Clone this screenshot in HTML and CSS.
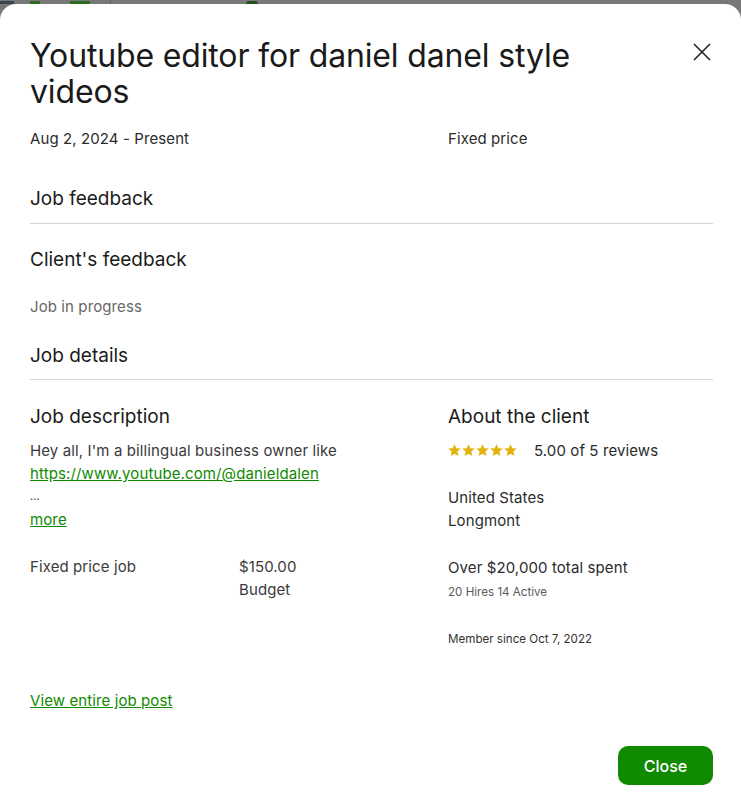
FILE: index.html
```html
<!DOCTYPE html>
<html lang="en">
<head>
<meta charset="utf-8">
<title>Job details</title>
<link rel="stylesheet" href="styles.css">
</head>
<body>
<div class="backdrop">
  <div class="bg-strip">
    <span class="bg-dark"></span>
    <span class="bg-green g1"></span>
    <span class="bg-green g2"></span>
    <span class="bg-line"></span>
    <span class="bg-dot"></span>
  </div>
  <div class="modal">
    <div class="modal-head">
      <h1 class="title">Youtube editor for daniel danel style videos</h1>
      <button class="x-btn" aria-label="Close">
        <svg width="18" height="18" viewBox="0 0 18 18"><path d="M1 1L17 17M17 1L1 17" stroke="#222" stroke-width="1.6" fill="none"/></svg>
      </button>
    </div>
    <div class="two-col meta">
      <div>Aug 2, 2024 - Present</div>
      <div>Fixed price</div>
    </div>

    <h2 class="section ruled">Job feedback</h2>
    <h2 class="section sub">Client's feedback</h2>
    <p class="muted">Job in progress</p>

    <h2 class="section ruled details">Job details</h2>

    <div class="two-col body-cols">
      <div class="col">
        <h3 class="col-title">Job description</h3>
        <div class="desc">
          <div>Hey all, I'm a billingual business owner like</div>
          <div><a href="#" class="link">https://www.youtube.com/@danieldalen</a></div>
          <div class="ellipsis">...</div>
          <div><a href="#" class="link">more</a></div>
        </div>
        <div class="price-row">
          <div>Fixed price job</div>
          <div>$150.00<br>Budget</div>
        </div>
      </div>
      <div class="col">
        <h3 class="col-title">About the client</h3>
        <div class="rating">
          <span class="stars">
            <svg viewBox="0 0 70 13" width="70" height="13">
              <defs><path id="st" d="M6.5 0.2L8.3 4.3L12.8 4.6L9.4 7.6L10.4 12.1L6.5 9.7L2.6 12.1L3.6 7.6L0.2 4.6L4.7 4.3Z"/></defs>
              <use href="#st" x="0" fill="#e1b30e"/>
              <use href="#st" x="14" fill="#e1b30e"/>
              <use href="#st" x="28" fill="#e1b30e"/>
              <use href="#st" x="42" fill="#e1b30e"/>
              <use href="#st" x="56" fill="#e1b30e"/>
            </svg>
          </span>
          <span>5.00 of 5 reviews</span>
        </div>
        <div class="loc">United States<br>Longmont</div>
        <div class="spent">Over $20,000 total spent</div>
        <div class="small">20 Hires 14 Active</div>
        <div class="small member">Member since Oct 7, 2022</div>
      </div>
    </div>

    <div class="view-row"><a href="#" class="link">View entire job post</a></div>

    <div class="footer">
      <button class="close-btn">Close</button>
    </div>
  </div>
</div>
</body>
</html>
```

FILE: styles.css
```css
* { box-sizing: border-box; }
html, body { margin: 0; padding: 0; }
body {
  font-family: Inter, "Liberation Sans", Arial, sans-serif;
  color: #1f1f1f;
  background: #787878;
  overflow: hidden;
}
.backdrop { width: 741px; height: 811px; }
.bg-strip {
  height: 4px;
  display: flex;
  align-items: flex-end;
  overflow: hidden;
}
.bg-dark { display: block; width: 14px; height: 3px; background: #3c4450; }
.bg-green { display: block; height: 3px; background: #2e6a22; margin-left: 16px; }
.g1 { width: 10px; }
.g2 { width: 20px; margin-left: 30px; }
.bg-line { display: block; width: 1px; height: 4px; background: #5f5f5f; margin-left: 20px; }
.bg-dot { display: block; width: 12px; height: 3px; border-radius: 6px 6px 0 0; background: #24501d; margin-left: 135px; }

.modal {
  background: #fff;
  border-radius: 16px 16px 0 0;
  padding: 34px 28px 0 30px;
  height: 807px;
}
.modal-head {
  display: flex;
  justify-content: space-between;
  align-items: flex-start;
}
.title {
  margin: 0;
  font-size: 32px;
  line-height: 36px;
  font-weight: 400;
  color: #1a1a1a;
  width: 600px;
  letter-spacing: -0.15px;
}
.x-btn {
  background: none;
  border: 0;
  padding: 0;
  margin: 5px 2px 0 0;
  width: 18px;
  height: 18px;
  display: flex;
}
.two-col {
  display: grid;
  grid-template-columns: 418px 1fr;
}
.meta {
  margin-top: 18px;
  font-size: 15px;
  line-height: 22px;
  color: #2b2b2b;
  letter-spacing: 0.1px;
}
.section {
  margin: 0;
  font-size: 19px;
  line-height: 24px;
  font-weight: 400;
  color: #1a1a1a;
}
.ruled {
  margin-top: 37px;
  padding-bottom: 12px;
  border-bottom: 1px solid #d5d5d5;
}
.sub { margin-top: 24px; }
.muted {
  margin: 24px 0 0;
  font-size: 15px;
  line-height: 22px;
  color: #676767;
  letter-spacing: 0.1px;
}
.details { margin-top: 26px; padding-bottom: 11px; }
.body-cols { margin-top: 25px; }
.col-title {
  margin: 0;
  font-size: 19px;
  line-height: 24px;
  font-weight: 400;
  color: #1a1a1a;
}
.desc {
  margin-top: 10px;
  font-size: 15px;
  line-height: 23px;
  color: #3a3a3a;
  letter-spacing: 0.12px;
}
.ellipsis { font-size: 11px; }
.link { color: #108a00; text-decoration: underline; }
.price-row {
  margin-top: 24px;
  display: grid;
  grid-template-columns: 209px 1fr;
  font-size: 15px;
  line-height: 23px;
  color: #3a3a3a;
  letter-spacing: 0.1px;
}
.rating {
  margin-top: 10px;
  display: flex;
  align-items: center;
  gap: 16px;
  font-size: 15px;
  line-height: 23px;
  color: #2b2b2b;
  letter-spacing: 0.1px;
}
.stars { display: flex; }
.loc {
  margin-top: 24px;
  font-size: 15px;
  line-height: 23px;
  color: #2b2b2b;
  letter-spacing: 0.1px;
}
.spent {
  margin-top: 24px;
  font-size: 15px;
  line-height: 23px;
  color: #2b2b2b;
  letter-spacing: 0.1px;
}
.small {
  font-size: 11.6px;
  line-height: 16px;
  color: #5a5a5a;
  margin-top: 5px;
}
.member { margin-top: 31px; color: #333; }
.view-row {
  margin-top: 42px;
  font-size: 15px;
  line-height: 23px;
  letter-spacing: 0.1px;
}
.footer {
  display: flex;
  justify-content: flex-end;
  margin-top: 34px;
}
.close-btn {
  width: 95px;
  height: 39px;
  border: 0;
  border-radius: 10px;
  background: #108a00;
  color: #fff;
  font-family: Inter, "Liberation Sans", Arial, sans-serif;
  font-size: 16px;
  font-weight: 500;
}
```
